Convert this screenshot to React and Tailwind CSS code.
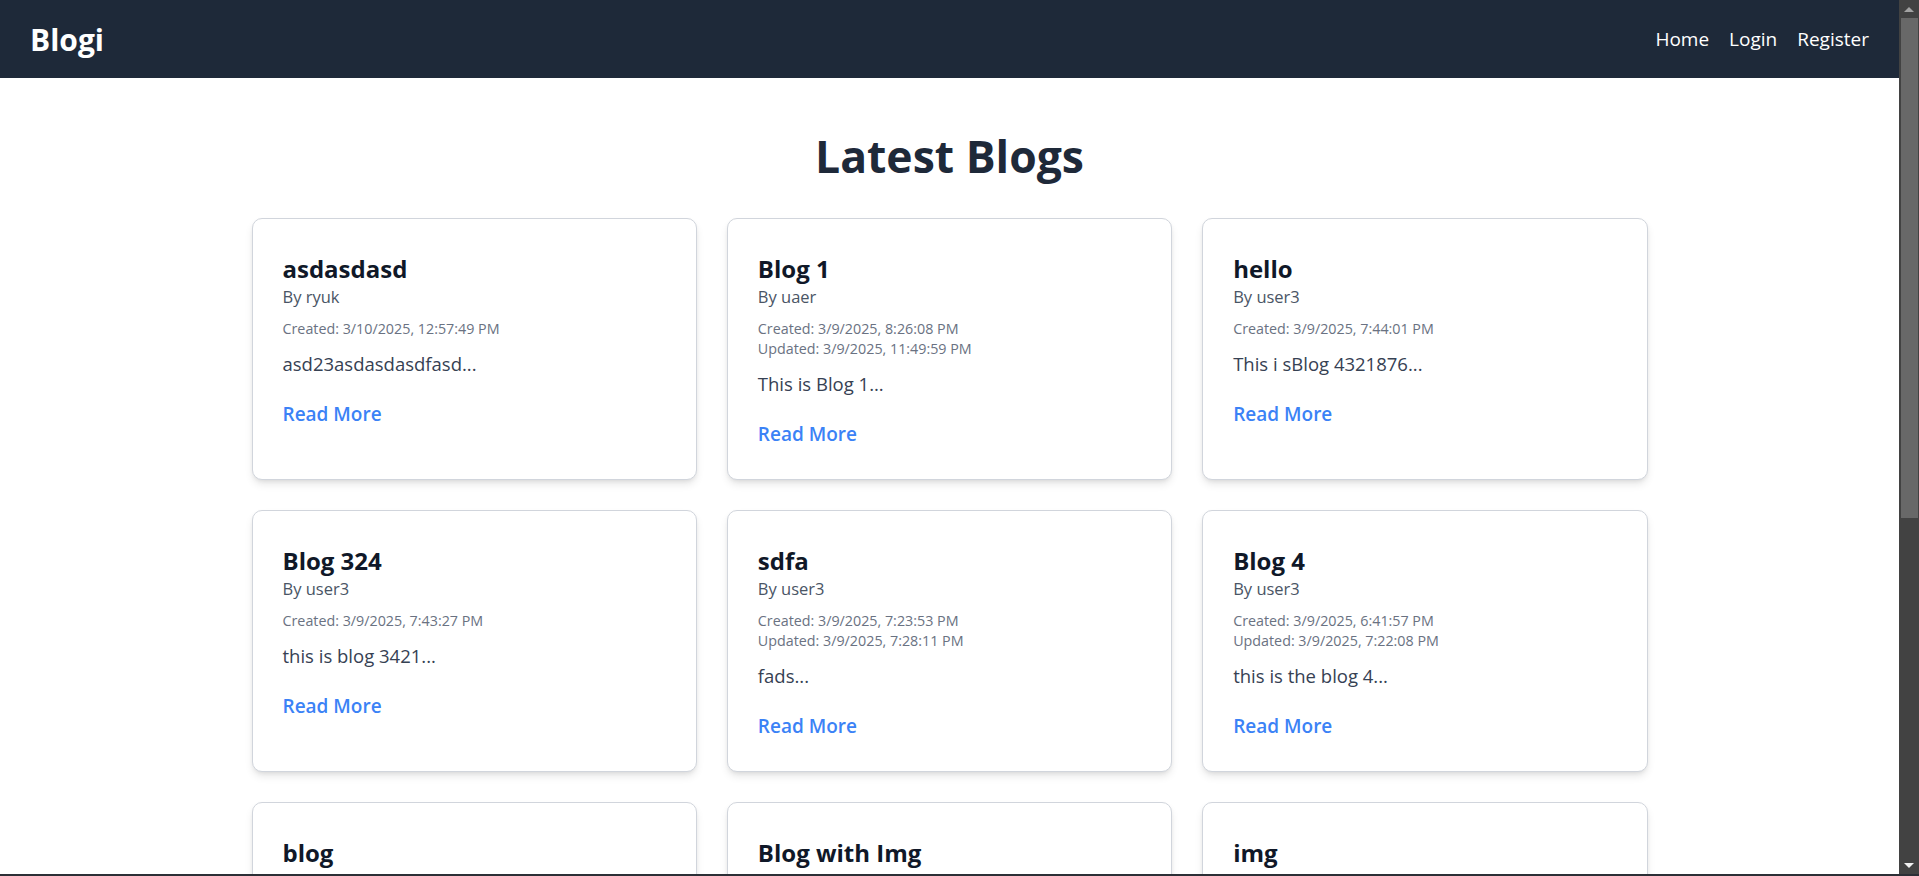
import React from "react";

const blogs = [
  {
    title: "asdasdasd",
    author: "ryuk",
    created: "3/10/2025, 12:57:49 PM",
    excerpt: "asd23asdasdasdfasd...",
  },
  {
    title: "Blog 1",
    author: "uaer",
    created: "3/9/2025, 8:26:08 PM",
    updated: "3/9/2025, 11:49:59 PM",
    excerpt: "This is Blog 1...",
  },
  {
    title: "hello",
    author: "user3",
    created: "3/9/2025, 7:44:01 PM",
    excerpt: "This i sBlog 4321876...",
  },
  {
    title: "Blog 324",
    author: "user3",
    created: "3/9/2025, 7:43:27 PM",
    excerpt: "this is blog 3421...",
  },
  {
    title: "sdfa",
    author: "user3",
    created: "3/9/2025, 7:23:53 PM",
    updated: "3/9/2025, 7:28:11 PM",
    excerpt: "fads...",
  },
  {
    title: "Blog 4",
    author: "user3",
    created: "3/9/2025, 6:41:57 PM",
    updated: "3/9/2025, 7:22:08 PM",
    excerpt: "this is the blog 4...",
  },
  {
    title: "blog",
    author: "user3",
    created: "3/9/2025, 6:12:40 PM",
    excerpt: "blog...",
  },
  {
    title: "Blog with Img",
    author: "user3",
    created: "3/9/2025, 5:58:21 PM",
    excerpt: "blog with image...",
  },
  {
    title: "img",
    author: "user3",
    created: "3/9/2025, 5:40:02 PM",
    excerpt: "img...",
  },
];

function Navbar() {
  return (
    <nav className="bg-gray-800 h-[78px] px-[30px] flex items-center justify-between">
      <a href="#" className="text-white text-[30px] font-bold">
        Blogi
      </a>
      <div className="flex items-center gap-[20px] text-white text-[19px]">
        <a href="#">Home</a>
        <a href="#">Login</a>
        <a href="#">Register</a>
      </div>
    </nav>
  );
}

function BlogCard({ blog }) {
  return (
    <div className="bg-white border border-gray-300 rounded-[10px] p-[30px] shadow-[0_5px_8px_-1px_rgba(0,0,0,0.1),0_2px_5px_-2px_rgba(0,0,0,0.1)]">
      <h2 className="text-[24px] leading-[35px] pt-[2px] -mb-[2px] font-bold text-gray-900">
        {blog.title}
      </h2>
      <p className="text-[16.5px] leading-[25px] text-gray-600">By {blog.author}</p>
      <div className="mt-[10px] text-[14.3px] leading-[20px] text-gray-500">
        <p>Created: {blog.created}</p>
        {blog.updated && <p>Updated: {blog.updated}</p>}
      </div>
      <p className="mt-[10px] text-[18.5px] leading-[30px] text-gray-700">
        {blog.excerpt}
      </p>
      <a
        href="#"
        className="mt-[20px] inline-block text-[19px] leading-[30px] font-semibold text-[#3b82f6]"
      >
        Read More
      </a>
    </div>
  );
}

// the window's dark scrollbar, drawn as a strip at the right
function Scrollbar() {
  return (
    <div className="w-[20px] shrink-0 bg-[#424242] flex flex-col">
      <div className="h-[18px] flex items-center justify-center">
        <div className="w-0 h-0 border-x-[5px] border-x-transparent border-b-[5px] border-b-[#a3a3a3]" />
      </div>
      <div className="h-[500px] ml-[2px] mr-[1px] bg-[#686868]" />
      <div className="flex-1" />
      <div className="h-[18px] flex items-center justify-center">
        <div className="w-0 h-0 border-x-[5px] border-x-transparent border-t-[5px] border-t-[#f0f0f0]" />
      </div>
    </div>
  );
}

export default function App() {
  return (
    <div className="h-screen flex flex-col bg-white font-['Open_Sans',sans-serif]">
      <div className="flex-1 min-h-0 flex">
        <div className="flex-1 min-w-0 overflow-hidden">
          <Navbar />
          <main className="pb-[50px]">
            <h1 className="mt-[53px] mb-[37px] text-center text-[44.5px] leading-[50px] font-bold text-gray-800">
              Latest Blogs
            </h1>
            <div className="max-w-[1396px] mx-auto grid grid-cols-3 gap-[30px]">
              {blogs.map((b, i) => (
                <BlogCard key={i} blog={b} />
              ))}
            </div>
          </main>
        </div>
        <Scrollbar />
      </div>
      <div className="h-[2px] bg-[#2c2f36]" />
    </div>
  );
}
